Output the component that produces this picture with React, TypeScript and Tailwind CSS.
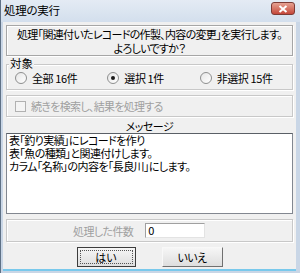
import React from "react";

const font = {
  fontFamily: '"Noto Sans CJK JP", "Noto Sans", sans-serif',
};

function Radio({ checked, label }: { checked?: boolean; label: string }) {
  return (
    <div className="flex items-center gap-[5px]">
      <div className="w-[12px] h-[12px] rounded-full border border-[#8e8f8f] bg-gradient-to-br from-[#e6e6e6] to-[#ffffff] flex items-center justify-center">
        {checked && <div className="w-[4px] h-[4px] rounded-full bg-[#1a1a1a]" />}
      </div>
      <span className="text-[11px] leading-[14px] tracking-[-0.4px] text-black">{label}</span>
    </div>
  );
}

export default function App() {
  return (
    <div
      className="w-[300px] h-[273px] bg-[#c9d6e6] flex flex-col border-l border-[#5f7186] [font-feature-settings:'palt']"
      style={font}
    >
      {/* Title bar */}
      <div className="h-[22px] flex items-center justify-between pl-[3px] pr-[5px] bg-gradient-to-b from-[#e4ebf4] to-[#d3dfed]">
        <span className="text-[11.5px] leading-none tracking-[-0.3px] text-black">処理の実行</span>
        <div className="w-[24px] h-[13px] -mt-[5px] rounded-[3px] border border-[#7d3b35] bg-gradient-to-b from-[#e5a192] to-[#c4463a] flex items-center justify-center">
          <svg width="10" height="8" viewBox="0 0 10 8">
            <path d="M1.5 1 L8.5 7 M8.5 1 L1.5 7" stroke="#ffffff" strokeWidth="2" />
          </svg>
        </div>
      </div>
      {/* Body */}
      <div className="flex-1 flex flex-col bg-[#f0f0f0] ml-[2px] mr-[4px] mb-[2px] border-b-[2px] border-[#79c9ec] px-[3px] pt-[3px]">
        {/* Prompt */}
        <div className="h-[31px] border border-[#a6a6a6] shadow-[inset_1px_1px_0_#ffffff,1px_1px_0_#ffffff] flex flex-col items-center justify-center text-[11px] leading-[14px] tracking-[-0.7px] text-black">
          <div className="whitespace-nowrap">処理「関連付いたレコードの作製、内容の変更」を実行します。</div>
          <div className="whitespace-nowrap">よろしいですか？</div>
        </div>
        {/* Target group */}
        <div className="relative mt-[8px] h-[26px] border border-[#c8c8c8] shadow-[inset_1px_1px_0_#ffffff,1px_1px_0_#ffffff] grid grid-cols-3 items-center pl-[8px] pt-[1px]">
          <span className="absolute -top-[8px] left-[2px] bg-[#f0f0f0] px-[1px] text-[11.5px] leading-[13px] text-black">
            対象
          </span>
          <Radio label="全部 16件" />
          <Radio checked label="選択 1件" />
          <Radio label="非選択 15件" />
        </div>
        {/* Checkbox group */}
        <div className="mt-[5px] h-[22px] border border-[#c8c8c8] shadow-[inset_1px_1px_0_#ffffff,1px_1px_0_#ffffff] flex items-center pl-[8px] gap-[5px]">
          <div className="w-[11px] h-[11px] border border-[#b1b1b1] bg-[#f4f4f4]" />
          <span className="text-[11px] leading-[14px] tracking-[-0.7px] text-[#a0a0a0] whitespace-nowrap">
            続きを検索し、結果を処理する
          </span>
        </div>
        {/* Message label */}
        <div className="mt-[2px] text-center text-[11px] leading-[14px] tracking-[-0.5px] text-black">メッセージ</div>
        {/* Textarea */}
        <div className="h-[81px] border border-[#828790] border-t-[#5a5f66] bg-white px-[2px] text-[11px] leading-[13px] tracking-[-0.6px] text-black">
          <div className="whitespace-nowrap">表「釣り実績」にレコードを作り</div>
          <div className="whitespace-nowrap">表「魚の種類」と関連付けします。</div>
          <div className="whitespace-nowrap">カラム「名称」の内容を「長良川」にします。</div>
        </div>
        {/* Count group */}
        <div className="mt-[5px] h-[23px] border border-[#c8c8c8] shadow-[inset_1px_1px_0_#ffffff,1px_1px_0_#ffffff] flex items-center pl-[66px] gap-[12px]">
          <span className="text-[11px] leading-[14px] tracking-[-0.6px] text-[#a0a0a0] whitespace-nowrap">処理した件数</span>
          <div className="w-[60px] h-[15px] border border-[#a0a0a0] border-b-[#e3e3e3] border-r-[#e3e3e3] bg-white flex items-center pl-[2px] text-[11px] leading-none text-black">
            0
          </div>
        </div>
        {/* Buttons */}
        <div className="mt-[5px] flex justify-center gap-[26px]">
          <div className="w-[59px] h-[20px] border border-[#3c3c3c] bg-gradient-to-b from-[#f6f6f6] to-[#dedede] flex items-center justify-center">
            <div className="w-[53px] h-[14px] border border-dotted border-[#555] flex items-center justify-center text-[11px] leading-none text-black">
              はい
            </div>
          </div>
          <div className="w-[61px] h-[20px] border border-[#707070] border-t-[#f8f8f8] border-l-[#f8f8f8] bg-gradient-to-b from-[#f6f6f6] to-[#dedede] flex items-center justify-center text-[11px] leading-none tracking-[-0.5px] text-black">
            いいえ
          </div>
        </div>
      </div>
    </div>
  );
}
